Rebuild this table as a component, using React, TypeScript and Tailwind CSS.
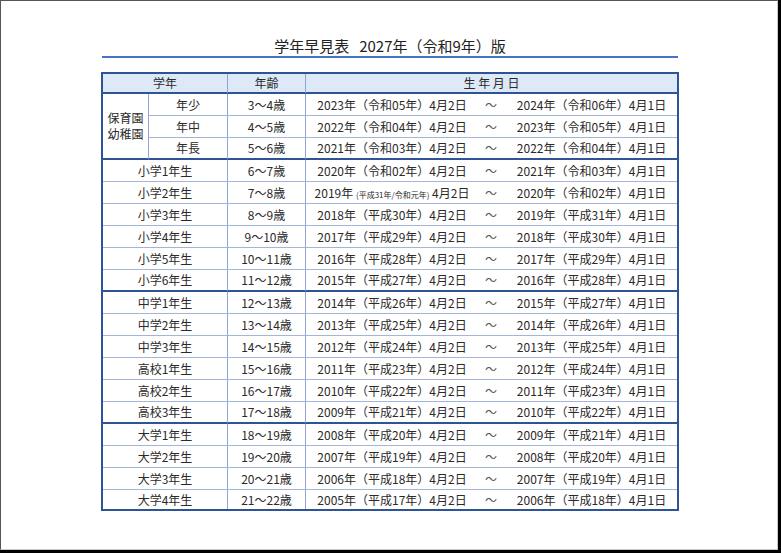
import React from 'react'

type Row = {
  grade: string
  age: string
  from: string
  fromEra: string
  to: string
  toEra: string
  groupEnd?: boolean
}

const rows: Row[] = [
  { grade: '年少', age: '3～4歳', from: '2023', fromEra: '令和05', to: '2024', toEra: '令和06' },
  { grade: '年中', age: '4～5歳', from: '2022', fromEra: '令和04', to: '2023', toEra: '令和05' },
  { grade: '年長', age: '5～6歳', from: '2021', fromEra: '令和03', to: '2022', toEra: '令和04', groupEnd: true },
  { grade: '小学1年生', age: '6～7歳', from: '2020', fromEra: '令和02', to: '2021', toEra: '令和03' },
  { grade: '小学2年生', age: '7～8歳', from: '2019', fromEra: '', to: '2020', toEra: '令和02' },
  { grade: '小学3年生', age: '8～9歳', from: '2018', fromEra: '平成30', to: '2019', toEra: '平成31' },
  { grade: '小学4年生', age: '9～10歳', from: '2017', fromEra: '平成29', to: '2018', toEra: '平成30' },
  { grade: '小学5年生', age: '10～11歳', from: '2016', fromEra: '平成28', to: '2017', toEra: '平成29' },
  { grade: '小学6年生', age: '11～12歳', from: '2015', fromEra: '平成27', to: '2016', toEra: '平成28', groupEnd: true },
  { grade: '中学1年生', age: '12～13歳', from: '2014', fromEra: '平成26', to: '2015', toEra: '平成27' },
  { grade: '中学2年生', age: '13～14歳', from: '2013', fromEra: '平成25', to: '2014', toEra: '平成26' },
  { grade: '中学3年生', age: '14～15歳', from: '2012', fromEra: '平成24', to: '2013', toEra: '平成25' },
  { grade: '高校1年生', age: '15～16歳', from: '2011', fromEra: '平成23', to: '2012', toEra: '平成24' },
  { grade: '高校2年生', age: '16～17歳', from: '2010', fromEra: '平成22', to: '2011', toEra: '平成23' },
  { grade: '高校3年生', age: '17～18歳', from: '2009', fromEra: '平成21', to: '2010', toEra: '平成22', groupEnd: true },
  { grade: '大学1年生', age: '18～19歳', from: '2008', fromEra: '平成20', to: '2009', toEra: '平成21' },
  { grade: '大学2年生', age: '19～20歳', from: '2007', fromEra: '平成19', to: '2008', toEra: '平成20' },
  { grade: '大学3年生', age: '20～21歳', from: '2006', fromEra: '平成18', to: '2007', toEra: '平成19' },
  { grade: '大学4年生', age: '21～22歳', from: '2005', fromEra: '平成17', to: '2006', toEra: '平成18' },
]

export default function App() {
  const last = rows.length - 1

  // 行ごとの下線
  const lineFor = (i: number) => {
    if (i === last) return ''
    if (rows[i].groupEnd) return 'border-b-2 border-b-[#2f5496]'
    return 'border-b border-b-[#a3b5d8]'
  }

  return (
    <div
      className="w-[781px] h-[553px] bg-black"
      style={{ fontFamily: '"Noto Sans CJK JP", "Noto Sans", sans-serif' }}
    >
      <div className="w-[778px] h-[550px] bg-white border-l border-t border-[#555] border-r border-r-[#c8c8c8] border-b border-b-[#c8c8c8] text-[#2a2a2a]">
        <div className="ml-[100px] w-[578px] pt-[35px]">
          {/* タイトル */}
          <div className="mx-[1px] h-[22px] border-b-2 border-[#4472c4] text-center text-[15px] leading-[19px] text-[#222] whitespace-nowrap">
            学年早見表<span className="ml-[10px]">2027年（令和9年）版</span>
          </div>

          {/* 表 */}
          <div className="mt-[14px] border-2 border-[#2f5496] grid grid-cols-[46px_79px_78px_371px] grid-rows-[20px_repeat(18,22px)_19px] text-[12px]">
            <div className="col-span-2 flex items-center justify-center bg-[#dde9f6] border-r border-r-[#8ea6d6] border-b-2 border-b-[#2f5496]">
              学年
            </div>
            <div className="flex items-center justify-center bg-[#dde9f6] border-r border-r-[#8ea6d6] border-b-2 border-b-[#2f5496]">
              年齢
            </div>
            <div className="flex items-center justify-center bg-[#dde9f6] border-b-2 border-b-[#2f5496] whitespace-pre">
              生 年 月 日
            </div>

            {rows.map((r, i) => (
              <React.Fragment key={r.grade}>
                {i === 0 && (
                  <div className="row-span-3 flex flex-col items-center justify-center leading-[16px] border-r border-r-[#8ea6d6] border-b-2 border-b-[#2f5496]">
                    <span>保育園</span>
                    <span>幼稚園</span>
                  </div>
                )}
                <div
                  className={`${i < 3 ? '' : 'col-span-2'} flex items-center justify-center border-r border-r-[#8ea6d6] ${lineFor(i)}`}
                >
                  {r.grade}
                </div>
                <div className={`flex items-center justify-center border-r border-r-[#8ea6d6] ${lineFor(i)}`}>
                  {r.age}
                </div>
                <div className={`grid grid-cols-[170px_30px_1fr] items-center ${lineFor(i)}`}>
                  <div className="text-center whitespace-nowrap pl-[2px]">
                    {r.fromEra ? (
                      <>{r.from}年（{r.fromEra}年）4月2日</>
                    ) : (
                      <>
                        {r.from}年 <span className="text-[8px]">(平成31年/令和元年)</span> 4月2日
                      </>
                    )}
                  </div>
                  <div className="text-center text-[#555]">～</div>
                  <div className="text-center whitespace-nowrap">
                    {r.to}年（{r.toEra}年）4月1日
                  </div>
                </div>
              </React.Fragment>
            ))}
          </div>
        </div>
      </div>
    </div>
  )
}
